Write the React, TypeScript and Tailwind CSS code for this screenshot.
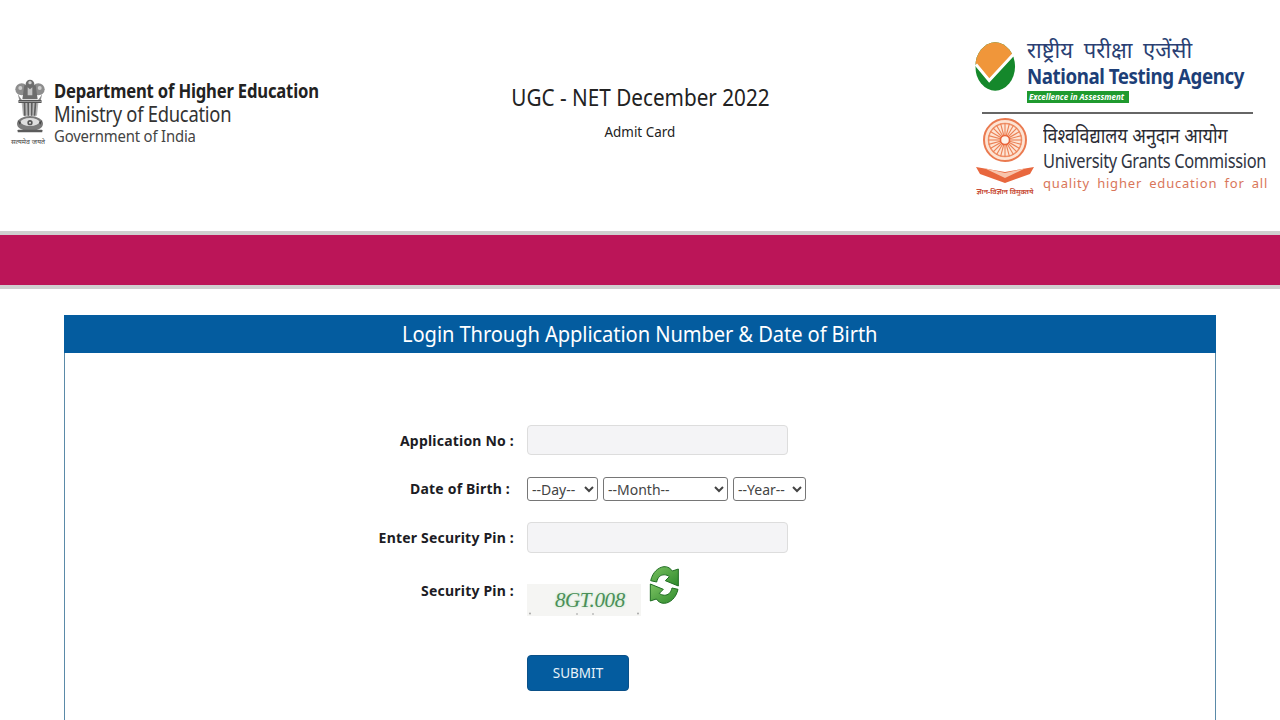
import React from "react";

const Emblem = () => (
  <svg width="30" height="55" viewBox="0 0 90 165" className="block">
    <ellipse cx="45" cy="18" rx="13" ry="13" fill="#6f6f6f" />
    <ellipse cx="45" cy="14" rx="5" ry="5" fill="#cfcfcf" />
    <ellipse cx="20" cy="34" rx="19" ry="18" fill="#8d8d8d" />
    <ellipse cx="70" cy="34" rx="19" ry="18" fill="#8d8d8d" />
    <circle cx="16" cy="30" r="6" fill="#cdcdcd" />
    <circle cx="74" cy="30" r="6" fill="#cdcdcd" />
    <path d="M28 22h34l6 42H22z" fill="#6d6d6d" />
    <path d="M38 28l7 6 7-6v24H38z" fill="#c4c4c4" />
    <path d="M8 46c6 12 12 18 14 22h46c3-5 9-10 14-22l-6 26H14z" fill="#8a8a8a" />
    <rect x="10" y="66" width="70" height="9" rx="2" fill="#555" />
    <rect x="10" y="70" width="70" height="2" fill="#bbb" />
    <path d="M20 75h50l-4 38H24z" fill="#b5b5b5" />
    <path d="M26 75h5l1 38h-5zM37 75h5v38h-4zM48 75h5l-1 38h-4zM59 75h5l-3 38h-5z" fill="#5f5f5f" />
    <ellipse cx="45" cy="137" rx="39" ry="23" fill="#7a7a7a" />
    <ellipse cx="45" cy="132" rx="28" ry="12" fill="#dedede" />
    <circle cx="45" cy="134" r="8" fill="#555" />
    <circle cx="45" cy="134" r="3" fill="#ddd" />
    <path d="M8 126l10 8-4 6zM82 126l-10 8 4 6z" fill="#444" />
    <rect x="8" y="155" width="74" height="8" rx="2" fill="#5b5b5b" />
  </svg>
);

const NtaLogo = () => (
  <svg width="41" height="49" viewBox="48 50 122 148" className="block shrink-0 mt-[4px]">
    <defs>
      <clipPath id="nta-oval">
        <ellipse cx="108" cy="124" rx="60" ry="73" />
      </clipPath>
    </defs>
    <g clipPath="url(#nta-oval)">
      <rect x="48" y="50" width="122" height="148" fill="#15882b" />
      <path d="M48 50h122v35l-78 82-44-52z" fill="#f0963a" />
    </g>
    <path d="M50 118l40 48 74-80" fill="none" stroke="#fff" strokeWidth="9" />
  </svg>
);

const Chakra = () => {
  const spokes = Array.from({ length: 24 }, (_, i) => (i * 360) / 24);
  return (
    <svg width="60" height="68" viewBox="0 0 60 68" className="block">
      <circle cx="30" cy="24" r="21" fill="#fde4d4" stroke="#ea7a50" strokeWidth="2" />
      <circle cx="30" cy="24" r="16.5" fill="none" stroke="#ef9068" strokeWidth="1.5" />
      {spokes.map((a) => (
        <line key={a} x1="30" y1="24" x2="30" y2="7" stroke="#ec8054" strokeWidth="1.1" transform={`rotate(${a} 30 24)`} />
      ))}
      <circle cx="30" cy="24" r="4.5" fill="#fff3ea" stroke="#e9643a" strokeWidth="1.5" />
      <path d="M1 51l29 5 29-5-4 7-25 9-25-9z" fill="#e8673e" />
      <path d="M9 52l21 5 21-5-21 10z" fill="#f8c4ac" />
    </svg>
  );
};

const Refresh = () => (
  <svg width="34" height="40" viewBox="21 15 102 120" className="block">
    <defs>
      <linearGradient id="rg" x1="0" y1="0" x2="1" y2="1">
        <stop offset="0" stopColor="#7cc262" />
        <stop offset="1" stopColor="#2e8a2c" />
      </linearGradient>
    </defs>
    <g fill="url(#rg)" stroke="#1f6d22" strokeWidth="3" strokeLinejoin="round">
      <path d="M32 62C38 36 55 22 72 20c12-1 20 6 25 13l18-6v51L76 62l12-12c-8-7-22-8-30 0-4 4-6 8-8 16z" />
      <path d="M114 88c-6 26-23 40-40 42-12 1-20-6-25-13l-18 6V72l39 16-12 12c8 7 22 8 30 0 4-4 6-8 8-16z" />
    </g>
  </svg>
);

const labelCls =
  "w-[527px] shrink-0 text-right pr-[13px] text-[14px] font-bold text-[#1c1c24] tracking-[0.2px]";
const inputCls =
  "w-[261px] bg-[#f4f4f6] border border-[#dddddd] rounded-[4px] block";
const selectCls =
  "h-[24px] bg-white border border-[#767676] rounded-[3px] text-[14px] text-[#444]";

export default function App() {
  return (
    <div className="h-[720px] w-[1280px] overflow-hidden bg-white font-['Noto_Sans',sans-serif]">
      <header className="h-[231px] flex items-start">
        <div className="w-[305px] shrink-0 pt-[78px] pl-[10px] flex gap-[8px]">
          <div className="w-[36px] shrink-0 flex flex-col items-center">
            <div className="pl-[4px]"><Emblem /></div>
            <span className="mt-[4px] text-[7px] leading-[10px] text-[#444] whitespace-nowrap">सत्यमेव जयते</span>
          </div>
          <div className="flex flex-col text-[#222] whitespace-nowrap origin-left scale-x-[0.875] pt-[2px]">
            <span className="text-[19px] leading-[23px] font-bold tracking-[-0.2px]">Department of Higher Education</span>
            <span className="text-[21px] leading-[22px] text-[#333] tracking-[-0.3px]">Ministry of Education</span>
            <span className="mt-[2px] text-[17px] leading-[18px] text-[#444] tracking-[-0.2px]">Government of India</span>
          </div>
        </div>
        <div className="flex-1 flex flex-col items-center pt-[82px] text-[#222]">
          <span className="text-[23px] leading-[30px] scale-x-[0.9]">UGC - NET December 2022</span>
          <span className="text-[14px] leading-[20px] mt-[10px] scale-x-[0.96]">Admit Card</span>
        </div>
        <div className="w-[305px] shrink-0 pt-[38px]">
          <div className="flex gap-[11px]">
            <NtaLogo />
            <div className="flex flex-col whitespace-nowrap">
              <span className="-mt-[2px] text-[22px] leading-[26px] text-[#2a3f73] [word-spacing:5px]">राष्ट्रीय परीक्षा एजेंसी</span>
              <span className="text-[21px] leading-[28px] font-bold text-[#1d3f78] tracking-[-0.5px] origin-left scale-x-[0.893]">National Testing Agency</span>
              <span className="mt-[1px] w-[102px] h-[12px] bg-[#1f9a2e] text-white text-[8px] leading-[12px] italic font-bold pl-[2px]">Excellence in Assessment</span>
            </div>
          </div>
          <div className="ml-[7px] mt-[9px] w-[271px] h-[2px] bg-[#666]" />
          <div className="flex mt-[2px]">
            <div className="flex flex-col items-center w-[60px]">
              <Chakra />
              <span className="mt-[2px] text-[7px] leading-[12px] font-bold text-[#c9503a] whitespace-nowrap">ज्ञान-विज्ञान विमुक्तये</span>
            </div>
            <div className="flex flex-col whitespace-nowrap ml-[8px] mt-[8px]">
              <span className="text-[20px] leading-[24px] text-[#2b2b33] origin-left scale-x-[0.89]">विश्वविद्यालय अनुदान आयोग</span>
              <span className="text-[20px] leading-[26px] text-[#2f3442] tracking-[-0.4px] origin-left scale-x-[0.82]">University Grants Commission</span>
              <span className="text-[13px] leading-[18px] text-[#d9765a] tracking-[0.8px] [word-spacing:3px]">quality higher education for all</span>
            </div>
          </div>
        </div>
      </header>

      <div className="h-[58px] bg-[#bb1558] border-y-[4px] border-[#cfcfcf]" />

      <main className="mx-[64px] mt-[26px] h-[500px] border-x border-[#5a8aa8]">
        <h1 className="h-[38px] -mx-px bg-[#045c9f] text-white text-center text-[22px] leading-[37px] tracking-[-0.1px] font-normal">
          <span className="inline-block scale-x-[0.915]">Login Through Application Number &amp; Date of Birth</span>
        </h1>
        <form className="-ml-[65px] pt-[72px] flex flex-col">
          <div className="flex items-center h-[30px]">
            <label className={labelCls}>Application No :</label>
            <div className={`${inputCls} h-[30px]`} />
          </div>
          <div className="flex items-center h-[24px] mt-[22px]">
            <label className={`${labelCls} pr-[17px] -translate-y-[1px]`}>Date of Birth :</label>
            <div className="flex gap-[5px]">
              <select className={`${selectCls} w-[71px]`}><option>--Day--</option></select>
              <select className={`${selectCls} w-[125px]`}><option>--Month--</option></select>
              <select className={`${selectCls} w-[73px]`}><option>--Year--</option></select>
            </div>
          </div>
          <div className="flex items-center h-[31px] mt-[21px]">
            <label className={labelCls}>Enter Security Pin :</label>
            <div className={`${inputCls} h-[31px]`} />
          </div>
          <div className="flex items-start mt-[12px] h-[51px]">
            <label className={`${labelCls} pt-[15px]`}>Security Pin :</label>
            <div className="flex gap-[6px]">
              <div className="relative mt-[19px] w-[114px] h-[32px] bg-[#f5f5f3] pl-[28px] text-[#4a8f58] italic text-[21px] leading-[32px] tracking-[-0.4px] font-['Liberation_Serif',serif] [text-shadow:0_0_3px_#b8e4bc]">
                8GT.008
                <svg width="114" height="4" viewBox="0 0 114 4" className="absolute left-0 bottom-0">
                  <circle cx="3" cy="1.5" r="1" fill="#aaa" />
                  <circle cx="50" cy="2" r="1" fill="#bbb" />
                  <circle cx="66" cy="2" r="1" fill="#bbb" />
                  <circle cx="111" cy="1.5" r="1" fill="#aaa" />
                </svg>
              </div>
              <Refresh />
            </div>
          </div>
          <div className="flex mt-[39px]">
            <div className="w-[527px] shrink-0" />
            <button type="button" className="w-[102px] h-[36px] bg-[#045c9f] border border-[#0a5088] rounded-[4px] text-[#e8f2fa] text-[13.5px]">SUBMIT</button>
          </div>
        </form>
      </main>
    </div>
  );
}
